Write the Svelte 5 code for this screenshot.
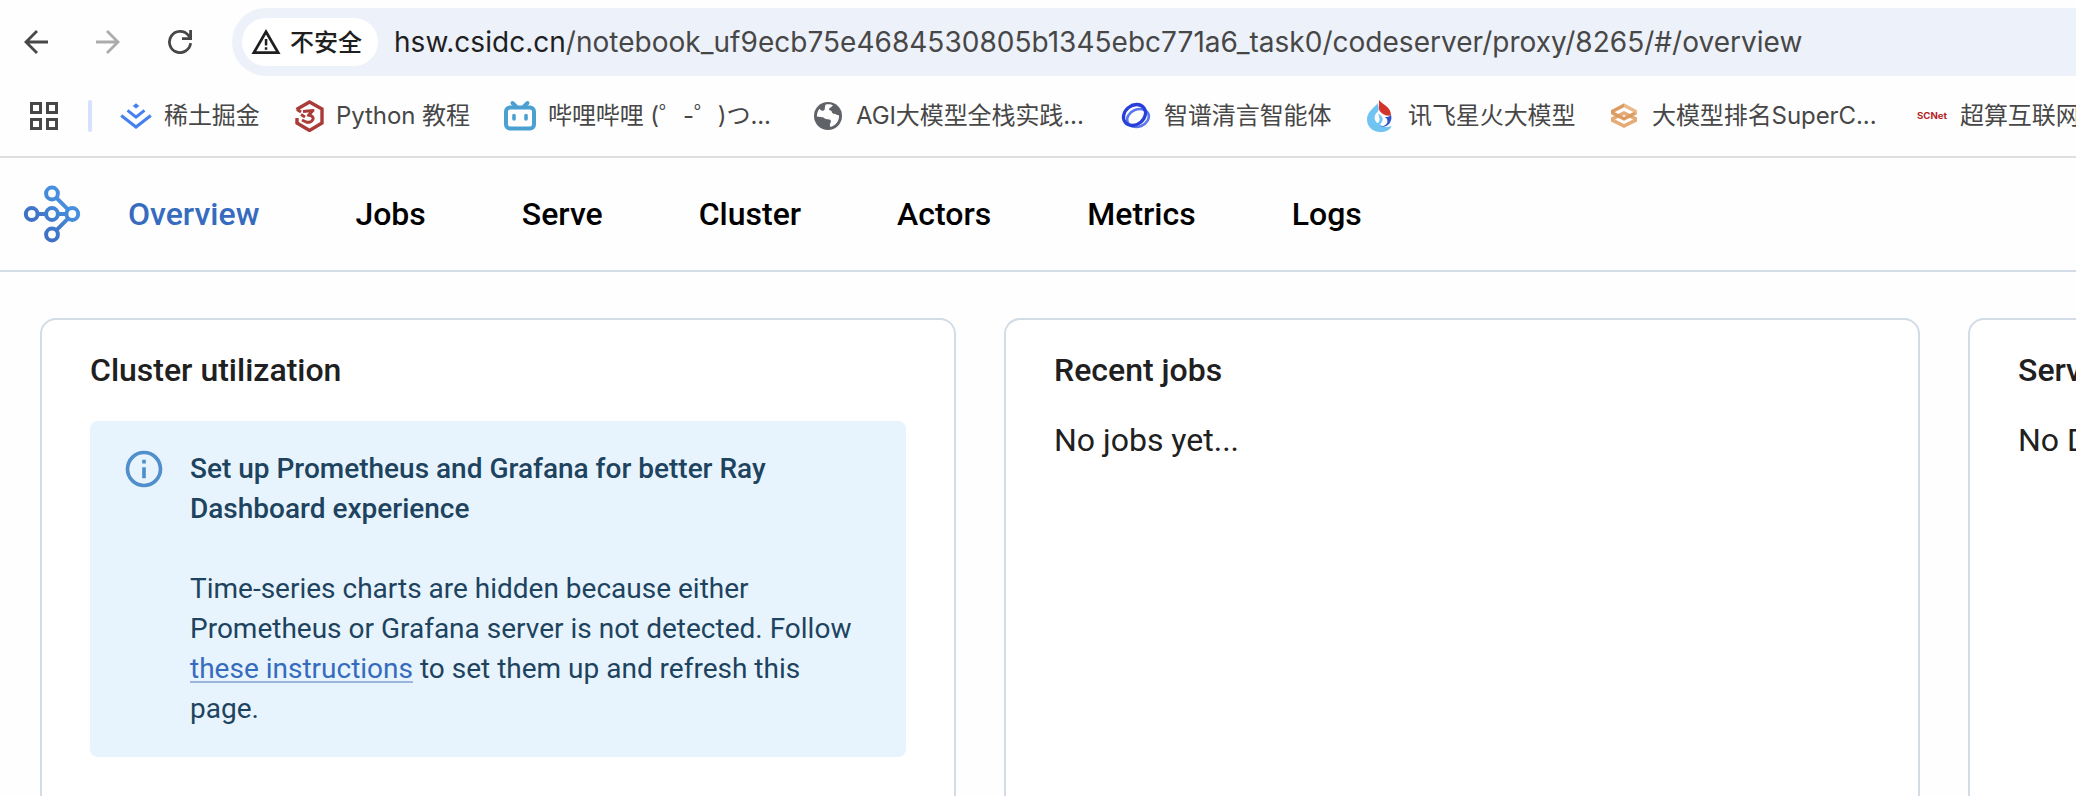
<script>
  const bookmarks = [
    { icon: 'juejin', label: '稀土掘金', width: 96 },
    { icon: 'python', label: 'Python 教程', width: 136 },
    { icon: 'bili', label: '哔哩哔哩 (゜-゜)つ...', width: 232 },
    { icon: 'globe', label: 'AGI大模型全栈实践...', width: 232 },
    { icon: 'zhipu', label: '智谱清言智能体', width: 168 },
    { icon: 'spark', label: '讯飞星火大模型', width: 168 },
    { icon: 'clue', label: '大模型排名SuperC...', width: 232 },
    { icon: 'scnet', label: '超算互联网', width: 140 }
  ];
  const tabs = ['Overview', 'Jobs', 'Serve', 'Cluster', 'Actors', 'Metrics', 'Logs'];
</script>

<div class="window">
  <header class="toolbar">
    <div class="buttons">
      <svg width="24" height="24" viewBox="0 0 24 24" fill="none" stroke="#474747" stroke-width="2.8"><path d="M24 12H2M13 1 2 12l11 11" /></svg>
      <svg width="24" height="24" viewBox="0 0 24 24" fill="none" stroke="#ababab" stroke-width="2.8"><path d="M0 12h22M11 1l11 11-11 11" /></svg>
      <svg width="24" height="24" viewBox="0 0 24 24" fill="none" stroke="#474747" stroke-width="2.8"><path d="M22.6 13.2A10.6 10.6 0 1 1 20.2 5.2L22 7.3M22.6 0v8.6H14" /></svg>
    </div>
    <div class="omnibox">
      <div class="chip">
        <svg width="30" height="26" viewBox="0 0 30 26"><path d="M15 2.700 27.200 23.700H2.800Z" fill="none" stroke="#1f1f1f" stroke-width="2.700" /><path d="M13.800 10h2.500v6.500h-2.500zM13.800 18.300h2.500v2.500h-2.500z" fill="#1f1f1f" /></svg>
        <span>不安全</span>
      </div>
      <div class="url"><b>hsw.csidc.cn</b>/notebook_uf9ecb75e4684530805b1345ebc771a6_task0/codeserver/proxy/8265/#/overview</div>
    </div>
  </header>

  <div class="bookmarks">
    <svg class="apps" width="28" height="28" viewBox="0 0 28 28" fill="none" stroke="#474747" stroke-width="3"><path d="M1.500 1.500h9v9h-9zM17.500 1.500h9v9h-9zM1.500 17.500h9v9h-9zM17.500 17.500h9v9h-9z" /></svg>
    <i class="split"></i>
    {#each bookmarks as b}
      <div class="bookmark">
        <svg width="32" height="32" viewBox="0 0 32 32">
          {#if b.icon === 'juejin'}
            <path d="M16 3.200 19.300 5.900 16 8.600 12.700 5.900Z" fill="#4580f0" />
            <path d="m7.500 10.300 8.500 6.800 8.500-6.800M1.200 15.500 16 27l14.800-11.500" fill="none" stroke="#4580f0" stroke-width="3" />
          {:else if b.icon === 'python'}
            <path d="M4.500 9.500 17.500 2 30 9v14l-12.500 7.500L5 23v-5" fill="none" stroke="#ab3b38" stroke-width="3.400" />
            <path d="M5 9.500 9 12M11 11.500l10-1-4.500 4.800c8 .5 4.500 8.500-2.500 6.700M9 14.500l4 2.500M10 20l4 2" fill="none" stroke="#ab3b38" stroke-width="3" stroke-linejoin="round" />
          {:else if b.icon === 'bili'}
            <path d="m8.500 3 4 4M23.500 3l-4 4" stroke="#4ba0d2" stroke-width="4" stroke-linecap="round" />
            <rect x="2" y="7.500" width="28" height="21" rx="4" fill="none" stroke="#4ba0d2" stroke-width="4" />
            <path d="M10 15.500v3.500M22 15.500v3.500" stroke="#4ba0d2" stroke-width="3.600" stroke-linecap="round" />
          {:else if b.icon === 'globe'}
            <circle cx="16" cy="16" r="14" fill="#5f6368" />
            <path d="M13.500 4.700C16 3.900 19.500 4.300 21 5.400L17.500 8.200c-1 .8-.2 2.300 1 2.300 1.800 0 .9 3.300 3.700 3.300 1.900 0 2.300 1.700 4.800 1.400C27.500 20.500 24 25.500 18.500 27c-1-1.500-.8-3.100 0-4.300.8-1.200.5-2.900-1-3.100l-3.700-.7c-1.500-.3-1.800-1.700-3.300-1.700L4.900 16.500C4.800 14 5.700 11 7.500 8.800c.8 1.200 2 2 3.500 1.900 2.700-.2 1.300-3.300 2.500-6Z" fill="#fff" />
          {:else if b.icon === 'zhipu'}
            <ellipse cx="18" cy="18" rx="11.200" ry="8.600" transform="rotate(-22 18 18)" fill="none" stroke="#5c76ee" stroke-width="2.600" />
            <ellipse cx="14.500" cy="15" rx="11.800" ry="9.600" transform="rotate(-38 14.500 15)" fill="none" stroke="#2840d8" stroke-width="3.300" />
          {:else if b.icon === 'spark'}
            <path d="M14 3C10 8 3 11.500 3 19.500 3 27 9 32 16 32c6 0 10-2 11.500-6-5 2-9 1-11-1.500-6-1.300-8.200-8.200-3-12.500C16 9 14 6 14 3Z" fill="#70c4f1" />
            <path d="M15 0c3 4 12 7 12 15-3 2-11-1-12-6Z" fill="#d4332b" />
            <path d="M27 14.500c2 7-3 13.500-11 12.500 7-1 10-6 5-10 2 .3 5-.5 6-2.500Z" fill="#3154cb" />
            <path d="M14 13.500c3 2 6 4 4 8-1 3-4 4-6 3 5-3 4-6 2-11Z" fill="#70c4f1" />
          {:else if b.icon === 'clue'}
            <path d="M3 17.500 16 11l13 6.500v4L16 15 3 21.500Z" fill="#e4ad78" />
            <path d="M3 17.500 16 24l13-6.500v4L16 28 3 21.500Z" fill="#e4ad78" />
            <path d="M3 10.300 16 17l13-6.700V14l-13 6.800L3 14Z" fill="#dc9b60" />
            <path d="M3 10.300 16 3.300V7.300L3 14Z" fill="#dc9b60" />
            <path d="M16 3.300 29 10.300V14L16 7.300Z" fill="#e9bb8c" />
          {:else}
            <text x="1" y="18.500" textLength="30" lengthAdjust="spacingAndGlyphs" font-family="Inter, sans-serif" font-size="8.800" font-weight="700" fill="#b51f27">SCNet</text>
          {/if}
        </svg>
        <span class="label" style:width="{b.width}px">{b.label}</span>
      </div>
    {/each}
  </div>

  <nav>
    <svg class="logo" width="58" height="58" viewBox="0 0 58 58" fill="none" stroke="url(#ray)" stroke-width="4">
      <defs><linearGradient id="ray" gradientUnits="userSpaceOnUse" x1="42" y1="18" x2="18" y2="42"><stop offset="0" stop-color="#4790df" /><stop offset="1" stop-color="#3f70c5" /></linearGradient></defs>
      <circle cx="29" cy="8.500" r="5.900" /><circle cx="8.700" cy="29" r="5.900" /><circle cx="29" cy="29" r="5.900" /><circle cx="49.300" cy="29" r="5.900" /><circle cx="29" cy="49.500" r="5.900" />
      <path d="M14.500 29.010h8.600M34.900 29.010h8.500M33.200 12.700l12 12M33.200 45.300l12-12" />
    </svg>
    {#each tabs as tab, i}
      <span class:active={i === 0}>{tab}</span>
    {/each}
  </nav>

  <main>
    <section>
      <h2>Cluster utilization</h2>
      <div class="alert">
        <svg width="44" height="44" viewBox="0 0 22 22" fill="#508fcb"><path d="M10.080 6.420h1.830v1.830h-1.830zm0 3.660h1.830v5.500h-1.830zM11 1.830a9.170 9.170 0 1 0 0 18.340 9.170 9.170 0 0 0 0-18.340zm0 16.500a7.330 7.330 0 1 1 0-14.660 7.330 7.330 0 0 1 0 14.660z" /></svg>
        <div class="message">
          <strong>Set up Prometheus and Grafana for better Ray<br />Dashboard experience</strong>
          <p>Time-series charts are hidden because either<br />Prometheus or Grafana server is not detected. Follow<br /><a href="#/overview">these instructions</a> to set them up and refresh this<br />page.</p>
        </div>
      </div>
    </section>
    <section>
      <h2>Recent jobs</h2>
      <p class="empty">No jobs yet...</p>
    </section>
    <section>
      <h2>Serve Deployments</h2>
      <p class="empty">No Deployments yet...</p>
    </section>
  </main>
</div>

<style>
  :global(body) { margin: 0; background: #fff; overflow: hidden; }
  .window { width: 2076px; height: 796px; overflow: hidden; display: flex; flex-direction: column; background: #fefefe; font-family: Roboto, sans-serif; box-sizing: border-box; }
  .window :global(*) { box-sizing: border-box; }
  svg { display: block; flex: none; }
  .toolbar { height: 76px; padding-top: 8px; flex: none; display: flex; font-family: Inter, "Noto Sans CJK SC", sans-serif; }
  .buttons { width: 232px; flex: none; display: flex; align-items: center; gap: 48px; padding-left: 24px; }
  .omnibox { flex: 1; height: 68px; border-radius: 34px 0 0 34px; background: #edf1f9; display: flex; align-items: center; padding-left: 10px; }
  .chip { width: 136px; height: 48px; border-radius: 24px; background: #fff; display: flex; align-items: center; gap: 9px; padding-left: 9px; flex: none; font: 500 24px/34px "Noto Sans CJK SC", sans-serif; color: #1f1f1f; }
  .chip span { white-space: nowrap; position: relative; top: -1px; }
  .url { margin-left: 16px; white-space: nowrap; font-size: 28px; line-height: 34px; letter-spacing: 0.022px; color: #474747; }
  .url b { font-weight: 400; color: #1f1f1f; }
  .bookmarks { height: 82px; flex: none; display: flex; align-items: center; padding-left: 30px; border-bottom: 2px solid #dfdfe0; }
  .split { width: 4px; height: 32px; border-radius: 2px; background: #d6e1fb; margin: 0 28px 0 30px; flex: none; }
  .bookmark { display: flex; align-items: center; gap: 12px; margin-right: 32px; flex: none; }
  .label { font: 24px/32px Inter, "Noto Sans CJK SC", sans-serif; letter-spacing: -0.08px; color: #474747; white-space: nowrap; }
  nav { height: 114px; flex: none; border-bottom: 2px solid #d2dce6; display: flex; align-items: center; gap: 96px; padding-left: 23px; font-size: 32px; font-weight: 500; line-height: 40px; color: #000; }
  .logo { margin-right: -49px; }
  .active { color: #366bbe; }
  main { flex: 1; padding: 46px 0 0 40px; display: flex; gap: 48px; }
  section { width: 916px; height: 600px; flex: none; border: 2px solid #d2dce6; border-radius: 16px; padding: 29px 48px; color: #202020; background: #fff; }
  h2 { margin: 0; font-size: 32px; font-weight: 500; line-height: 42px; white-space: nowrap; }
  .alert { margin-top: 30px; height: 336px; border-radius: 8px; background: #e7f4fd; padding: 26px 32px; display: flex; gap: 24px; color: #1e435f; font-size: 28px; line-height: 40px; }
  .message { white-space: nowrap; padding-top: 2px; }
  .message strong { font-weight: 500; }
  .message p { margin: 40px 0 0; }
  a { color: #366bbe; text-decoration: underline; text-decoration-color: #9ab6df; text-decoration-thickness: 2px; text-underline-offset: 3px; }
  .empty { margin: 25px 0 0; font-size: 32px; line-height: 48px; white-space: nowrap; }
</style>
